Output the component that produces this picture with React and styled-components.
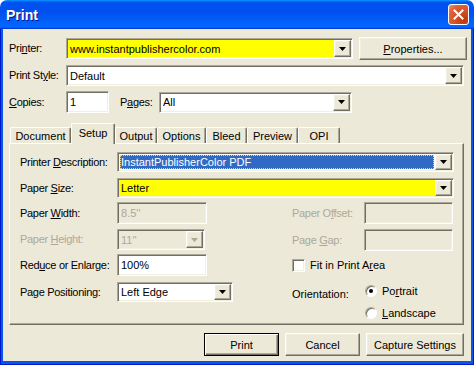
import React from 'react'
import styled, { createGlobalStyle, css } from 'styled-components'

const GlobalStyle = createGlobalStyle`
  html, body {
    margin: 0;
    padding: 0;
    background: #ffffff;
  }
  body {
    font-family: 'Liberation Sans', Arial, sans-serif;
    font-size: 11px;
    color: #000;
  }
`

const sunken = css`
  box-sizing: border-box;
  border: 1px solid;
  border-color: #aca899 #ffffff #ffffff #aca899;
  box-shadow: inset 1px 1px #716f64, inset -1px -1px #f1efe2;
`

const raised = css`
  box-sizing: border-box;
  border: 1px solid;
  border-color: #ffffff #716f64 #716f64 #ffffff;
  box-shadow: inset -1px -1px #aca899, inset 1px 1px #f1efe2;
`

const Window = styled.div`
  width: 474px;
  height: 365px;
  display: flex;
  flex-direction: column;
  border-radius: 7px 7px 0 0;
  overflow: hidden;
`

const TitleBar = styled.div`
  height: 29px;
  flex: none;
  display: flex;
  align-items: center;
  justify-content: space-between;
  padding: 0 5px 0 6px;
  box-sizing: border-box;
  background: linear-gradient(180deg, #0997ff, #0053ee 8%, #0050ee 40%, #0066ff 88%, #0066ff 93%, #005bff 95%, #003dd7 96%, #003dd7);
`

const Title = styled.span`
  font-family: 'Liberation Sans', Arial, sans-serif;
  font-weight: bold;
  font-size: 14px;
  color: #fff;
  text-shadow: 1px 1px #0f1089;
  margin-top: 1px;
`

const CloseButton = styled.div`
  width: 21px;
  height: 21px;
  box-sizing: border-box;
  border: 1px solid #fff;
  border-radius: 3px;
  background: radial-gradient(circle at 80% 80%, #b83a0c 0%, #d4502a 45%, #e0653d 75%, #ec9a78 100%);
  display: flex;
  align-items: center;
  justify-content: center;
`

const Frame = styled.div`
  flex: 1;
  display: flex;
  background: #0a55e6;
  padding: 0 3px 4px 3px;
  box-shadow: inset 1px 0 #0019c8, inset -1px 0 #0019c8, inset 0 -1px #0019c8;
`

const Body = styled.div`
  flex: 1;
  background: #ece9d8;
  display: flex;
  flex-direction: column;
  padding: 8px 4px 0 6px;
`

const Row = styled.div`
  display: flex;
  align-items: center;
  height: ${p => p.$h || 21}px;
  margin-top: ${p => p.$mt || 0}px;
`

const Label = styled.span`
  flex: none;
  width: ${p => (p.$w ? `${p.$w}px` : 'auto')};
  line-height: ${p => p.$h || 21}px;
  letter-spacing: -0.3px;
  color: ${p => (p.$disabled ? '#aca899' : '#000')};
  white-space: nowrap;
  grid-column: ${p => p.$col || 'auto'};
  margin-left: ${p => p.$ml || 0}px;
`

const Field = styled.div`
  ${sunken};
  flex: none;
  width: ${p => (p.$w ? `${p.$w}px` : '100%')};
  height: ${p => p.$h || 21}px;
  background: ${p => p.$bg || '#fff'};
  color: ${p => (p.$disabled ? '#aca899' : '#000')};
  padding: 1px;
  display: flex;
  align-items: stretch;
  grid-column: ${p => p.$col || 'auto'};
`

const Value = styled.span`
  flex: 1;
  display: flex;
  align-items: center;
  padding: 0 1px;
  margin: 1px;
  white-space: nowrap;
  overflow: hidden;
  ${p =>
    p.$selected &&
    css`
      background: #316ac5;
      color: #fff;
      outline: 1px dotted #e6d28a;
      outline-offset: -1px;
    `}
`

const DropButton = styled.span`
  ${raised};
  width: 17px;
  flex: none;
  background: #ece9d8;
  display: flex;
  align-items: center;
  justify-content: center;
`

const Button = styled.div`
  ${raised};
  width: ${p => p.$w}px;
  height: 23px;
  background: #ece9d8;
  display: flex;
  align-items: center;
  justify-content: center;
  margin-left: ${p => p.$ml || 0}px;
  ${p =>
    p.$default &&
    css`
      border-color: #000;
      box-shadow: inset 1px 1px #fff, inset -1px -1px #716f64, inset -2px -2px #aca899;
    `}
`

const Key = styled.u`
  text-decoration: underline;
`

const TabStrip = styled.div`
  display: flex;
  align-items: flex-end;
  height: 21px;
  margin: 10px 0 -1px 0;
  padding-left: 1px;
  position: relative;
  z-index: 1;
`

const Tab = styled.div`
  box-sizing: border-box;
  width: ${p => p.$w}px;
  height: ${p => (p.$active ? 21 : 16)}px;
  margin-bottom: ${p => (p.$active ? 0 : 1)}px;
  border: 1px solid;
  border-color: #fff #716f64 transparent #fff;
  border-bottom: none;
  border-radius: 2px 2px 0 0;
  box-shadow: inset -1px 0 #aca899;
  background: #ece9d8;
  display: flex;
  align-items: center;
  justify-content: center;
  padding-bottom: ${p => (p.$active ? 3 : 0)}px;
`

const Panel = styled.div`
  box-sizing: border-box;
  width: 455px;
  height: 182px;
  border: 1px solid;
  border-color: #fff #716f64 #716f64 #fff;
  box-shadow: inset -1px -1px #aca899;
  padding: 8px 0 0 10px;
  display: grid;
  grid-template-columns: 97px 90px 85px 72px 89px;
  grid-template-rows: 26px 24px 27px 25px 28px 20px 18px;
  align-items: start;
`

const Check = styled.div`
  grid-column: ${p => p.$col || 'auto'};
  display: flex;
  align-items: center;
  gap: 5px;
  height: ${p => p.$h || 20}px;
  margin-top: ${p => p.$mt || 0}px;
`

const Box = styled.span`
  ${sunken};
  width: 13px;
  height: 13px;
  background: #fff;
  flex: none;
`

const Radio = styled.span`
  width: 12px;
  height: 12px;
  box-sizing: border-box;
  border-radius: 50%;
  border: 1px solid;
  border-color: #aca899 #fff #fff #aca899;
  box-shadow: inset 1px 1px #716f64;
  background: #fff;
  flex: none;
  display: flex;
  align-items: center;
  justify-content: center;
  margin-left: 1px;
  &::after {
    content: '';
    width: 4px;
    height: 4px;
    border-radius: 50%;
    background: ${p => (p.$on ? '#000' : 'transparent')};
  }
`

const ButtonBar = styled.div`
  display: flex;
  justify-content: flex-end;
  margin-top: 8px;
  padding-right: 3px;
`

const Arrow = ({ disabled }) => (
  <svg width="7" height="4" viewBox="0 0 7 4">
    <polygon points="0,0 7,0 3.5,4" fill={disabled ? '#aca899' : '#000'} />
  </svg>
)

const Select = ({ children, disabled, selected, ...rest }) => (
  <Field $disabled={disabled} {...rest}>
    <Value $selected={selected}>{children}</Value>
    <DropButton>
      <Arrow disabled={disabled} />
    </DropButton>
  </Field>
)

const Input = ({ children, ...rest }) => (
  <Field {...rest}>
    <Value>{children}</Value>
  </Field>
)

const tabs = [
  ['Document', 61],
  ['Setup', 44],
  ['Output', 42],
  ['Options', 49],
  ['Bleed', 41],
  ['Preview', 51],
  ['OPI', 42],
]

export default function App() {
  return (
    <>
      <GlobalStyle />
      <Window>
        <TitleBar>
          <Title>Print</Title>
          <CloseButton>
            <svg width="11" height="11" viewBox="0 0 11 11">
              <path d="M1.5 1.5 L9.5 9.5 M9.5 1.5 L1.5 9.5" stroke="#fff" strokeWidth="2" strokeLinecap="square" />
            </svg>
          </CloseButton>
        </TitleBar>
        <Frame>
          <Body>
            <Row $h={23}>
              <Label $w={57}>Pri<Key>n</Key>ter:</Label>
              <Select $w={287} $bg="#ffff00">www.instantpublishercolor.com</Select>
              <Button $w={108} $ml={6}><span><Key>P</Key>roperties...</span></Button>
            </Row>
            <Row $mt={5}>
              <Label $w={57}>Print St<Key>y</Key>le:</Label>
              <Select $w={398}>Default</Select>
            </Row>
            <Row $mt={5} $h={22}>
              <Label $w={57}><Key>C</Key>opies:</Label>
              <Input $w={43} $h={22}>1</Input>
              <Label $w={39} $ml={11}>P<Key>a</Key>ges:</Label>
              <Select $w={193}>All</Select>
            </Row>
            <TabStrip>
              {tabs.map(([name, w]) => (
                <Tab key={name} $w={w} $active={name === 'Setup'}>{name}</Tab>
              ))}
            </TabStrip>
            <Panel>
              <Label $h={20}>Printer <Key>D</Key>escription:</Label>
              <Select $col="2 / 6" $w={337} $h={20} selected>InstantPublisherColor PDF</Select>

              <Label $h={20}>Paper <Key>S</Key>ize:</Label>
              <Select $col="2 / 6" $w={337} $h={20} $bg="#ffff00">Letter</Select>

              <Label $h={22}>Paper <Key>W</Key>idth:</Label>
              <Input $w={90} $h={22} $bg="#ece9d8" $disabled>8.5''</Input>
              <Label $col="4" $h={22} $disabled>Paper O<Key>f</Key>fset:</Label>
              <Input $w={89} $h={22} $bg="#ece9d8" $disabled />

              <Label $h={21} $col="1" $disabled>Paper <Key>H</Key>eight:</Label>
              <Select $w={88} $h={21} $bg="#ece9d8" disabled>11''</Select>
              <Label $col="4" $h={22} $disabled>Page <Key>G</Key>ap:</Label>
              <Input $w={89} $h={22} $bg="#ece9d8" $disabled />

              <Label $h={22} $col="1">Red<Key>u</Key>ce or Enlarge:</Label>
              <Input $w={90} $h={22}>100%</Input>
              <Check $col="4 / 6" $h={22}>
                <Box />
                <span>Fit in Print A<Key>r</Key>ea</span>
              </Check>

              <Label $h={20} $col="1">Pa<Key>g</Key>e Positioning:</Label>
              <Select $w={116} $h={20}>Left Edge</Select>
              <Check $col="4" $h={20} $mt={2}>Orientation:</Check>
              <Check $h={18}>
                <Radio $on />
                <span>Po<Key>r</Key>trait</span>
              </Check>

              <Check $col="5" $h={14} $mt={4}>
                <Radio />
                <span><Key>L</Key>andscape</span>
              </Check>
            </Panel>
            <ButtonBar>
              <Button $w={75} $default>Print</Button>
              <Button $w={75} $ml={6}>Cancel</Button>
              <Button $w={98} $ml={6}>Capture Settings</Button>
            </ButtonBar>
          </Body>
        </Frame>
      </Window>
    </>
  )
}
